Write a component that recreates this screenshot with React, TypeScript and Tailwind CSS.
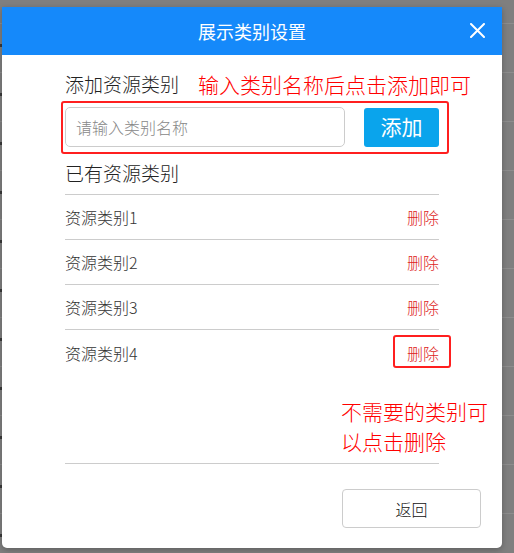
const rows = ["资源类别1", "资源类别2", "资源类别3", "资源类别4"];

const font = { fontFamily: '"Noto Sans CJK SC", "Noto Sans", sans-serif' };

export default function App() {
  return (
    <div className="relative h-[553px] w-[514px] overflow-hidden bg-[#7f7f7f] font-light" style={font}>
      {/* page underneath the modal */}
      <div className="pt-[23px]">
        {Array.from({ length: 11 }).map((_, i) => (
          <div key={i} className="relative h-[49px] border-t border-[#8d8d8d]">
            <span className="absolute left-0 top-[20px] h-[3px] w-[2px] bg-[#3a3a3a]" />
          </div>
        ))}
      </div>

      {/* modal */}
      <div className="absolute left-[2px] top-[7px] flex h-[541px] w-[500px] flex-col overflow-hidden rounded-b-[5px] bg-white shadow-[0_2px_6px_rgba(0,0,0,0.25)]">
        <div className="relative flex h-12 shrink-0 items-center justify-center bg-[#1589fa] text-[18px] font-normal text-white">
          展示类别设置
          <svg className="absolute right-[17px] top-[16px]" width="15" height="15" viewBox="0 0 15 15">
            <path d="M1 1L14 14M14 1L1 14" stroke="white" strokeWidth="2" strokeLinecap="round" />
          </svg>
        </div>

        <div className="relative flex flex-1 flex-col px-[63px]">
          <div className="mt-[15px] h-[28px] text-[19px] leading-[28px] text-[#222]">添加资源类别</div>

          <div className="mt-[9px] flex h-10 items-center">
            <input
              placeholder="请输入类别名称"
              className="h-10 w-[280px] rounded-[5px] border border-[#ccc] px-[10px] text-[16px] text-[#333] outline-none placeholder:text-[#888]"
            />
            <button className="ml-auto h-[39px] w-[75px] rounded-[3px] bg-[#0aa4ec] text-[21px] font-normal text-white">添加</button>
          </div>

          <div className="mt-[12px] h-[28px] text-[19px] leading-[28px] text-[#222]">已有资源类别</div>

          <div className="mt-[7px] border-t border-[#ccc]">
            {rows.map((r, i) => (
              <div
                key={r}
                className={`flex h-[45px] items-center justify-between text-[16px] ${i < rows.length - 1 ? "border-b border-[#ccc]" : ""}`}
              >
                <span className="text-[#333]">{r}</span>
                <span className="text-[#dd1c1c]">删除</span>
              </div>
            ))}
          </div>

          <div className="mt-[88px] border-t border-[#ccc]" />

          <div className="mt-[25px] flex justify-end">
            <button className="-mr-[42px] h-[39px] w-[139px] rounded-[4px] border border-[#ccc] text-[16px] text-[#111]">返回</button>
          </div>

          {/* annotations */}
          <div className="pointer-events-none absolute left-[59px] top-[46px] h-[53px] w-[388px] rounded-[3px] border-2 border-[#ff1f1f]" />
          <div className="pointer-events-none absolute left-[196px] top-[14px] text-[21px] leading-[30px] text-[#ff0000]">输入类别名称后点击添加即可</div>
          <div className="pointer-events-none absolute left-[391px] top-[280px] h-[33px] w-[58px] rounded-[3px] border-2 border-[#ff1f1f]" />
          <div className="pointer-events-none absolute left-[339px] top-[341px] w-[150px] text-[21px] leading-[30px] text-[#ff0000]">
            不需要的类别可
            <br />
            以点击删除
          </div>
        </div>
      </div>
    </div>
  );
}
